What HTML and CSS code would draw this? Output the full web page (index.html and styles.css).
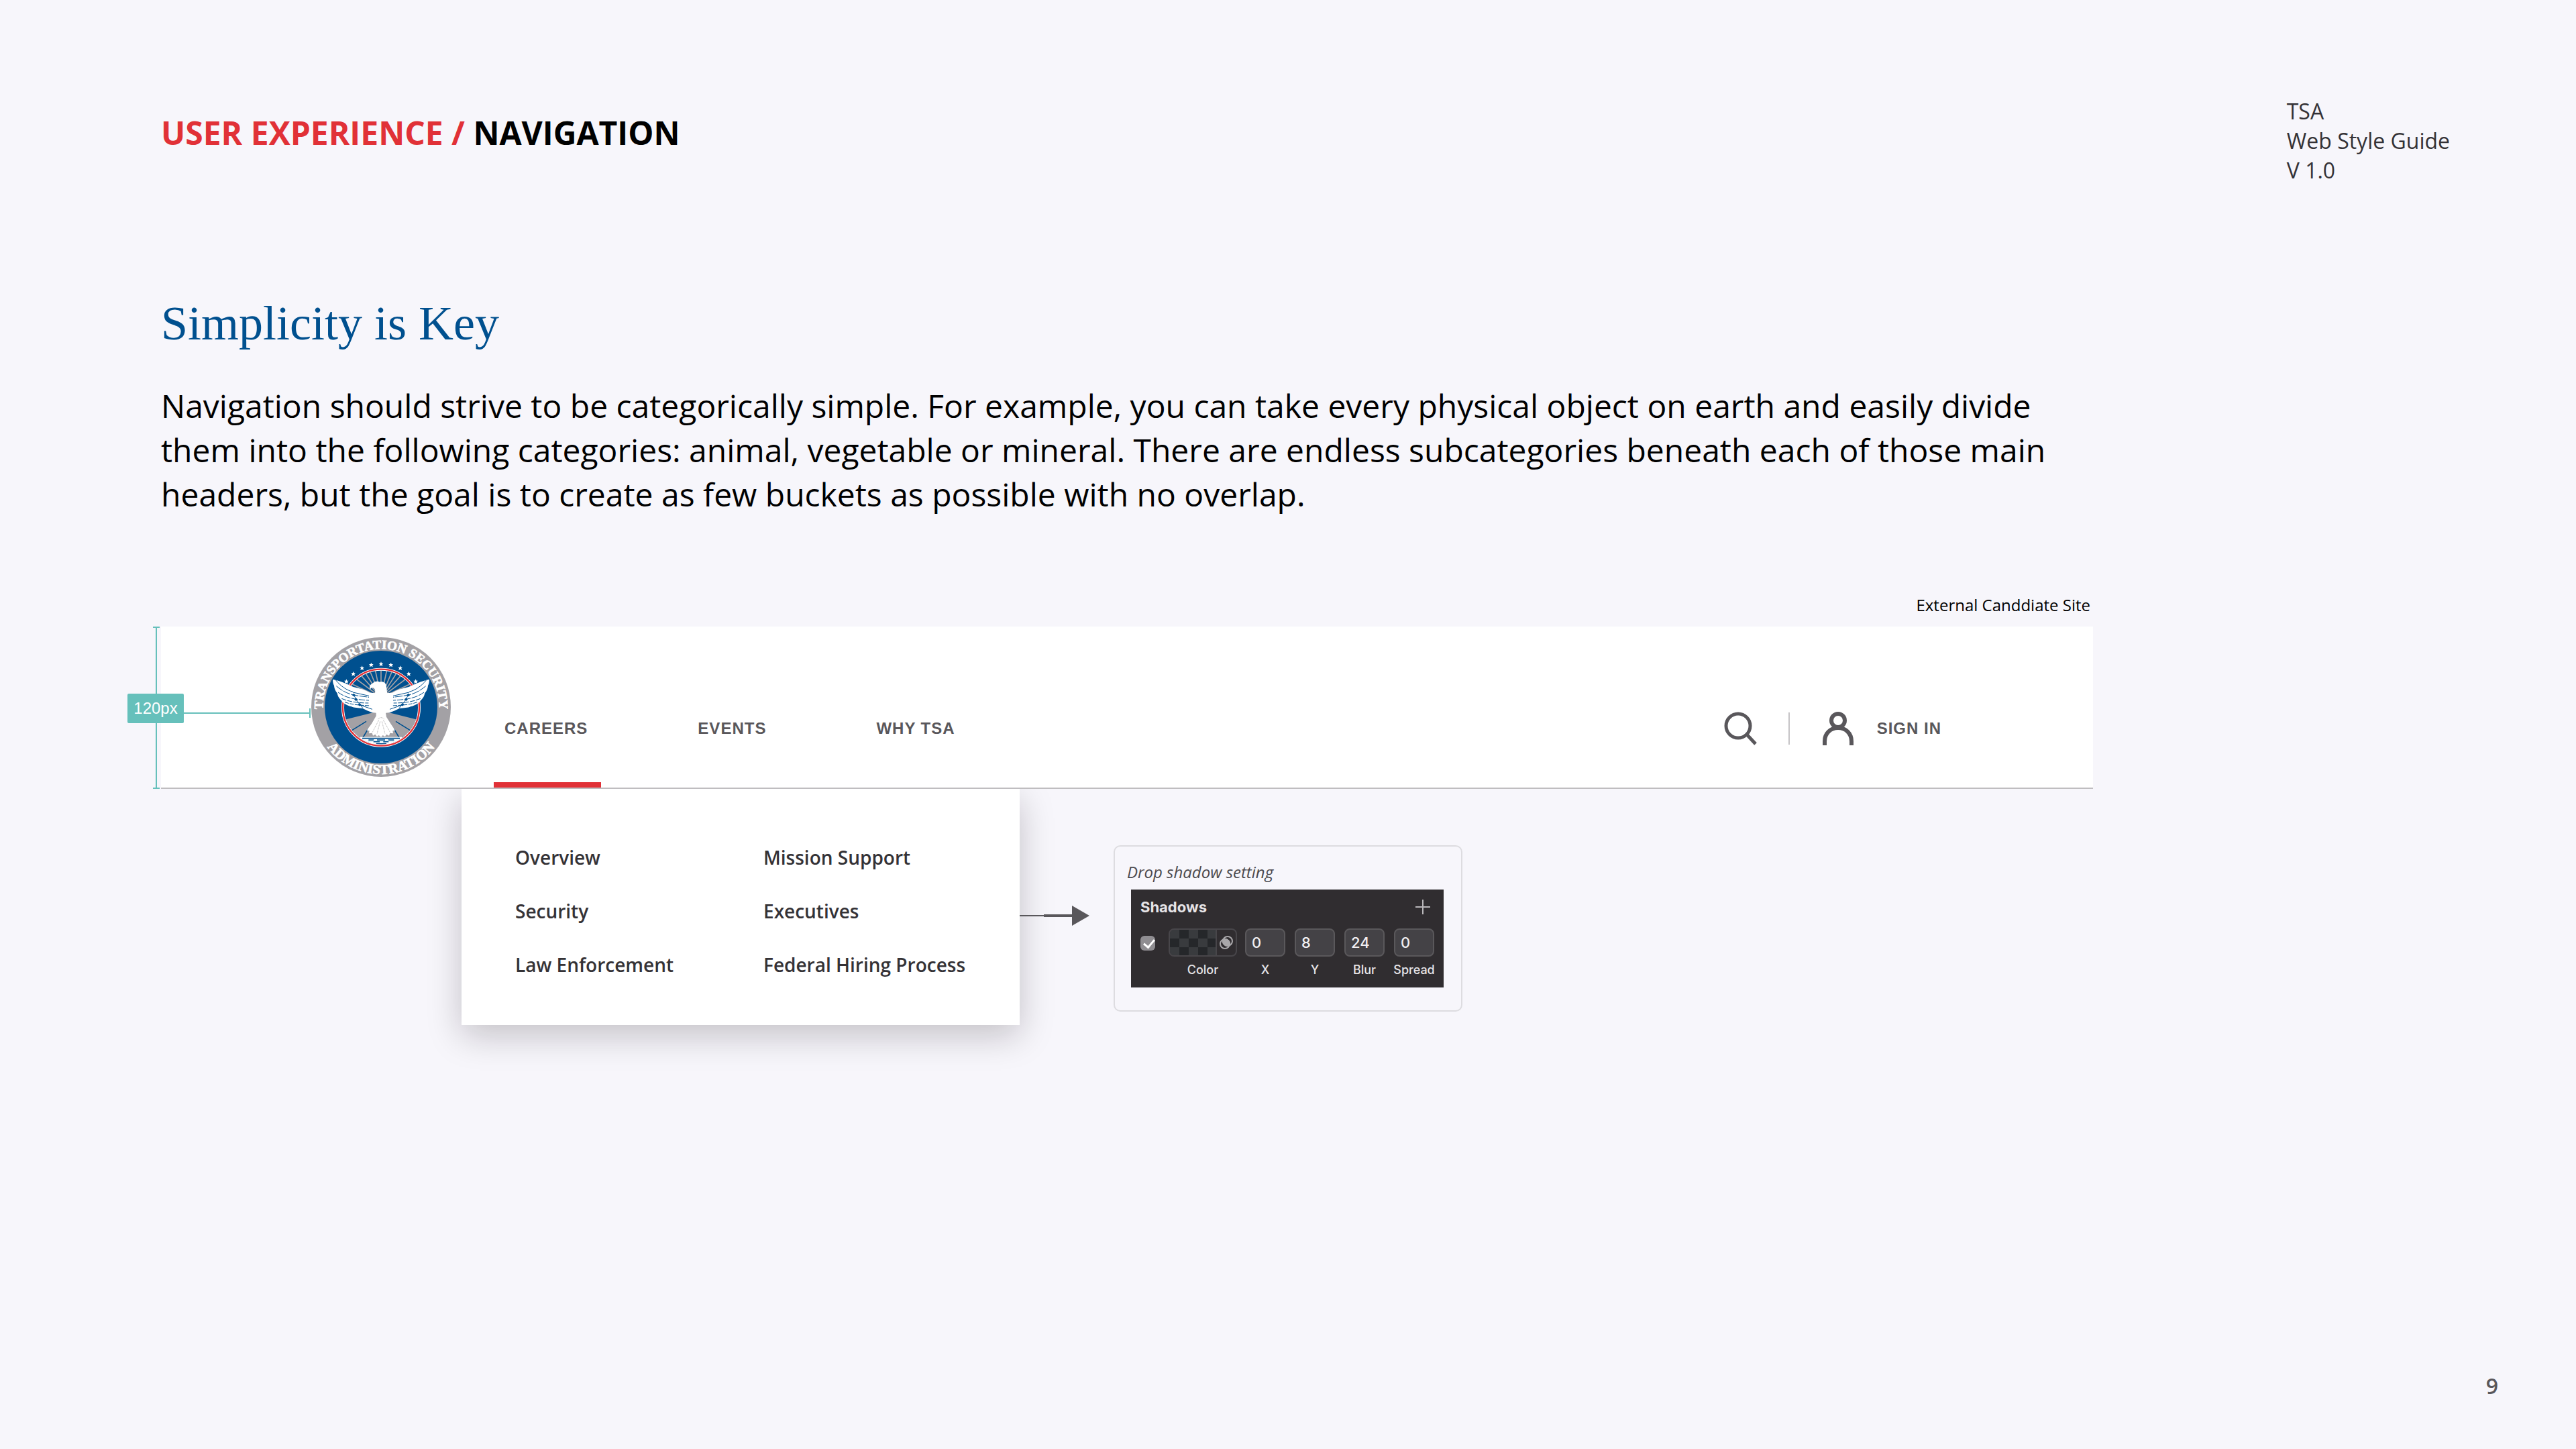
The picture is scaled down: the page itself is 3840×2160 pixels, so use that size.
FILE: index.html
```html
<!DOCTYPE html>
<html lang="en">
<head>
    <meta charset="UTF-8">
    <title>TSA Web Style Guide - Navigation</title>
    <link rel="stylesheet" href="styles.css">
</head>
<body>
    <header class="page-header">
        <h1><span class="section">USER EXPERIENCE /</span> NAVIGATION</h1>
        <p class="doc-info">TSA<br>Web Style Guide<br>V 1.0</p>
    </header>

    <main class="content">
        <h2>Simplicity is Key</h2>
        <p class="intro">Navigation should strive to be categorically simple. For example, you can take every physical object on earth and easily divide them into the following categories: animal, vegetable or mineral. There are endless subcategories beneath each of those main headers, but the goal is to create as few buckets as possible with no overlap.</p>

        <p class="caption">External Canddiate Site</p>

        <div class="navbar">
            <!-- Height annotation -->
            <div class="measure">
                <span class="measure-label">120px</span>
                <span class="measure-pointer"></span>
            </div>

            <svg class="logo" viewBox="72 60 624 624" role="img" aria-label="Transportation Security Administration">
                <defs>
                    <path id="arc-top" d="M384 632 A260 260 0 1 1 385 632"/>
                    <path id="arc-bottom" d="M84 372 A300 300 0 0 0 684 372"/>
                    <clipPath id="inner"><circle cx="384" cy="374" r="166"/></clipPath>
                    <path id="star" d="M0 -11 L3 -4 L10 -4 L5 1 L7 9 L0 5 L-7 9 L-5 1 L-10 -4 L-3 -4 Z"/>
                    <g id="wing">
                        <path fill="#fff" d="M168 248 C205 256 235 270 260 282 C290 288 315 296 335 308 L365 310 L384 400 L345 397 L322 388 L302 378 C280 376 265 376 252 370 C230 364 216 356 208 344 C194 332 190 320 188 310 C178 298 174 284 174 276 C169 266 168 258 168 248 Z"/>
                        <g fill="none" stroke="#00508f" stroke-width="3">
                            <path d="M182 252 C205 280 230 296 258 304"/>
                            <path d="M184 278 C215 304 245 318 285 322 L330 328" stroke-dasharray="34 4"/>
                            <path d="M192 306 C225 330 260 338 330 342" stroke-dasharray="28 5"/>
                            <path d="M208 334 C240 348 280 354 328 354" stroke-dasharray="22 5"/>
                            <path d="M222 350 C255 362 290 364 336 366" stroke-dasharray="18 5"/>
                            <path d="M258 306 L330 322 M262 318 L278 346 L302 376 M288 362 L345 382"/>
                        </g>
                        <path fill="#00508f" d="M254 318 l8 -7 l8 7 l-8 7z M264 338 l8 -7 l8 7 l-8 7z M280 361 l8 -7 l8 7 l-8 7z"/>
                    </g>
                </defs>
                <circle cx="384" cy="372" r="312" fill="#a3a1a5"/>
                <circle cx="384" cy="372" r="252" fill="#00508f"/>
                <text class="logo-text"><textPath href="#arc-top" startOffset="50%">TRANSPORTATION SECURITY</textPath></text>
                <text class="logo-text logo-text-bottom"><textPath href="#arc-bottom" startOffset="50%">ADMINISTRATION</textPath></text>

                <g fill="#fff">
                    <use href="#star" x="229" y="258"/>
                    <use href="#star" x="260" y="224"/>
                    <use href="#star" x="299" y="198"/>
                    <use href="#star" x="340" y="184"/>
                    <use href="#star" x="384" y="180"/>
                    <use href="#star" x="428" y="184"/>
                    <use href="#star" x="470" y="198"/>
                    <use href="#star" x="508" y="224"/>
                    <use href="#star" x="539" y="258"/>
                </g>

                <g clip-path="url(#inner)">
                    <!-- sun rays -->
                    <path fill="none" stroke="#a3a1a5" stroke-width="5" d="M384 330 L230 258 M384 330 L254 232 M384 330 L278 212 M384 330 L302 200 M384 330 L328 196 M384 330 L356 196 M384 330 V196 M384 330 L412 196 M384 330 L440 196 M384 330 L466 200 M384 330 L490 212 M384 330 L514 232 M384 330 L538 258"/>
                    <!-- ground -->
                    <path fill="#a3a1a5" d="M384 388 L222 428 L250 490 L302 512 H466 L518 490 L546 428 Z"/>
                    <path fill="none" stroke="#00508f" stroke-width="5" d="M318 436 L254 476 M450 436 L514 476 M326 470 L302 510 M442 470 L466 510"/>
                    <rect x="290" y="506" width="188" height="40" fill="#fff"/>
                    <path fill="none" stroke="#00508f" stroke-width="5" d="M300 512 H468 M328 519 h24 m14 0 h36 m14 0 h26 M350 527 h28 m16 0 h24 M362 536 h46"/>
                    <path fill="none" stroke="#4aa8c0" stroke-width="2" d="M324 524 h24 m20 0 h32 m20 0 h24"/>
                </g>
                <circle cx="384" cy="374" r="171" fill="none" stroke="#fff" stroke-width="12"/>
                <circle cx="384" cy="374" r="171" fill="none" stroke="#e13137" stroke-width="7"/>

                <!-- eagle -->
                <use href="#wing"/>
                <use href="#wing" transform="matrix(-1 0 0 1 768 0)"/>
                <path fill="#fff" d="M336 294 C330 282 334 270 346 266 C354 256 372 256 378 260 C392 256 404 262 407 274 L412 312 L424 380 L405 398 L408 416 L428 448 L447 476 L436 478 L438 490 L424 488 L420 500 L408 494 L402 504 L392 498 L384 506 L374 498 L366 504 L358 494 L348 500 L344 488 L330 490 L332 478 L320 476 L342 446 L362 412 L362 398 L344 380 L356 312 C362 296 352 284 344 286 C338 286 338 290 336 294 Z"/>
                <path fill="none" stroke="#a3a1a5" stroke-width="2" stroke-dasharray="10 4" d="M374 430 L346 484 M380 436 L366 492 M388 436 L402 492 M394 430 L424 484 M370 426 Q384 412 398 426"/>
            </svg>

            <nav class="links">
                <a class="active" href="#">CAREERS</a>
                <a href="#">EVENTS</a>
                <a href="#">WHY TSA</a>
            </nav>

            <div class="actions">
                <button type="button" class="search" aria-label="Search">
                    <svg viewBox="0 0 48 48" fill="none" stroke="#59575b" stroke-width="5">
                        <circle cx="21" cy="20" r="18"/>
                        <path d="M34 33 L47 47"/>
                    </svg>
                </button>
                <span class="divider"></span>
                <a class="sign-in" href="#">
                    <svg viewBox="0 0 48 48" fill="none" stroke="#59575b" stroke-width="6">
                        <circle cx="24" cy="12" r="10"/>
                        <path d="M4 49 V43 C4 31 13 23 24 23 C35 23 44 31 44 43 V49"/>
                    </svg>
                    SIGN IN
                </a>
            </div>
        </div>

        <div class="example">
            <ul class="dropdown">
                <li><a href="#">Overview</a></li>
                <li><a href="#">Mission Support</a></li>
                <li><a href="#">Security</a></li>
                <li><a href="#">Executives</a></li>
                <li><a href="#">Law Enforcement</a></li>
                <li><a href="#">Federal Hiring Process</a></li>
            </ul>

            <svg class="arrow" viewBox="0 0 104 30" fill="#59575b">
                <path d="M0 14 H36 V13 H78 V0 L104 15 L78 30 V17 H36 V16 H0 Z"/>
            </svg>

            <section class="card">
                <h3>Drop shadow setting</h3>
                <form class="panel">
                    <div class="panel-header">
                        <h4>Shadows</h4>
                        <button type="button" class="add" aria-label="Add shadow">
                            <svg viewBox="0 0 22 22" stroke="#b9b7ba" stroke-width="2"><path d="M11 0 V22 M0 11 H22"/></svg>
                        </button>
                    </div>
                    <div class="fields">
                        <input type="checkbox" class="enabled" aria-label="Enable shadow" checked>
                        <div class="field field-color">
                            <button type="button" class="swatch" id="color">
                                <span class="checker"></span>
                                <svg viewBox="0 0 20 24" fill="none" stroke="#a9a7aa" stroke-width="2">
                                    <circle cx="12" cy="10" r="7"/>
                                    <circle cx="8" cy="14" r="7"/>
                                    <path fill="#a9a7aa" d="M5 8 A7 7 0 0 1 15 16 A7 7 0 0 1 5 8 Z"/>
                                </svg>
                            </button>
                            <label for="color">Color</label>
                        </div>
                        <div class="field">
                            <input type="text" id="x" value="0">
                            <label for="x">X</label>
                        </div>
                        <div class="field">
                            <input type="text" id="y" value="8">
                            <label for="y">Y</label>
                        </div>
                        <div class="field">
                            <input type="text" id="blur" value="24">
                            <label for="blur">Blur</label>
                        </div>
                        <div class="field">
                            <input type="text" id="spread" value="0">
                            <label for="spread">Spread</label>
                        </div>
                    </div>
                </form>
            </section>
        </div>
    </main>

    <footer class="page-footer">9</footer>
</body>
</html>
```

FILE: styles.css
```css
* {
    box-sizing: border-box;
}

body {
    margin: 0;
    min-height: 100vh;
    display: flex;
    flex-direction: column;
    background-color: #f7f6fb;
    color: #000;
    font-family: "Open Sans", sans-serif;
}

h1, h2, h3, h4, p, ul {
    margin: 0;
    padding: 0;
}

a {
    color: inherit;
    text-decoration: none;
}

button {
    padding: 0;
    border: none;
    background: none;
    cursor: pointer;
}

svg {
    display: block;
    overflow: visible;
}

/* Page header */
.page-header {
    display: flex;
    justify-content: space-between;
    align-items: flex-start;
    padding: 144px 188px 0 240px;
}

h1 {
    margin-top: 22px;
    font-size: 48px;
    line-height: 64px;
    font-weight: 700;
}

.section {
    color: #e13137;
}

.doc-info {
    color: #343236;
    font-size: 32px;
    line-height: 44px;
    font-weight: 400;
}

/* Content */
.content {
    flex: 1;
    margin: 162px 720px 0 240px;
}

h2 {
    color: #00508f;
    font-family: "Liberation Serif", serif;
    font-size: 72px;
    line-height: 88px;
    font-weight: 400;
}

.intro {
    margin-top: 46px;
    font-size: 48px;
    line-height: 66px;
}

.caption {
    margin: 116px 4px 16px 0;
    font-size: 24px;
    line-height: 32px;
    text-align: right;
}

/* Navigation bar */
.navbar {
    position: relative;
    display: flex;
    align-items: flex-start;
    height: 242px;
    padding: 0 226px 0 224px;
    border-bottom: 2px solid #bfbdc0;
    background-color: #fff;
}

.logo {
    width: 208px;
    height: 208px;
    margin-top: 16px;
}

.logo-text {
    fill: #fff;
    stroke: #fff;
    stroke-width: 2px;
    font-family: "Liberation Serif", serif;
    font-size: 57px;
    font-weight: 700;
    text-anchor: middle;
}

.logo-text-bottom {
    font-size: 62px;
}

.links {
    display: flex;
    align-self: flex-end;
    gap: 128px;
    margin-left: 64px;
}

.links a,
.sign-in {
    color: #59575b;
    font-family: "Liberation Sans", sans-serif;
    font-size: 24px;
    line-height: 32px;
    font-weight: 700;
    letter-spacing: 1px;
}

.links a {
    padding: 0 20px 64px 16px;
    border-bottom: 8px solid transparent;
}

.links .active {
    border-color: #e13137;
}

.actions {
    display: flex;
    align-items: center;
    gap: 48px;
    margin: 128px 0 0 auto;
}

.actions svg {
    width: 48px;
    height: 48px;
}

.divider {
    width: 2px;
    height: 48px;
    background-color: #c5c3c6;
}

.sign-in {
    display: flex;
    align-items: center;
    gap: 34px;
}

/* Height annotation, drawn over the left edge of the bar */
.measure {
    position: absolute;
    top: 0;
    bottom: -2px;
    left: -12px;
    width: 10px;
    border: solid #66c0bb;
    border-width: 2px 0;
    background: linear-gradient(#66c0bb, #66c0bb) center / 2px 100% no-repeat;
}

.measure-label {
    position: absolute;
    top: 98px;
    left: -38px;
    width: 84px;
    border-radius: 2px;
    background-color: #66c0bb;
    color: #fff;
    font-family: "Liberation Sans", sans-serif;
    font-size: 24px;
    line-height: 44px;
    text-align: center;
}

.measure-pointer {
    position: absolute;
    top: 120px;
    left: 46px;
    width: 189px;
    height: 14px;
    border-right: 2px solid #66c0bb;
    background: linear-gradient(#66c0bb, #66c0bb) center / 100% 2px no-repeat;
}

/* Dropdown example */
.example {
    display: flex;
    align-items: flex-start;
    padding-left: 448px;
}

.dropdown {
    display: grid;
    grid-template-columns: 370px 1fr;
    width: 832px;
    padding: 62px 0 50px 80px;
    background-color: #fff;
    box-shadow: 0 16px 48px rgba(20, 10, 20, 0.22);
    color: #343236;
    font-size: 28px;
    line-height: 80px;
    font-weight: 600;
    list-style: none;
}

.arrow {
    width: 104px;
    height: 30px;
    margin-top: 174px;
}

/* Shadow settings */
.card {
    width: 520px;
    margin: 84px 0 0 36px;
    padding: 22px 26px 34px 18px;
    border: 2px solid #dddce0;
    border-radius: 10px;
}

.card h3 {
    color: #4c4a4e;
    font-size: 24px;
    line-height: 32px;
    font-style: italic;
    font-weight: 400;
}

.panel {
    margin: 10px 0 0 6px;
    padding: 12px 14px 14px;
    background-color: #302d30;
    color: #e6e4e7;
    font-family: Inter, sans-serif;
}

.panel-header {
    display: flex;
    justify-content: space-between;
    align-items: center;
    height: 28px;
    margin-bottom: 18px;
    padding-right: 6px;
}

.panel h4 {
    font-size: 22px;
    font-weight: 700;
}

.add svg {
    width: 22px;
    height: 22px;
}

.fields {
    display: flex;
    gap: 14px;
}

.enabled {
    appearance: none;
    width: 22px;
    height: 22px;
    margin: 11px 6px 0 0;
    border-radius: 6px;
    background-color: #8f8d91;
}

.enabled:checked::before {
    content: "";
    display: block;
    width: 7px;
    height: 13px;
    margin: 2px 0 0 8px;
    border: solid #fff;
    border-width: 0 3px 3px 0;
    transform: rotate(40deg);
}

.field {
    display: flex;
    flex-direction: column;
    align-items: center;
    gap: 8px;
    width: 60px;
    font-size: 18px;
    line-height: 24px;
    font-weight: 500;
}

.field-color {
    width: 102px;
    margin-right: -2px;
}

.field input {
    width: 60px;
    height: 42px;
    padding: 0 8px;
    border: 2px solid #5a585b;
    border-radius: 8px;
    background-color: #444246;
    color: #f0eef1;
    font-family: Inter, sans-serif;
    font-size: 22px;
    font-weight: 500;
}

.swatch {
    display: flex;
    align-items: center;
    gap: 4px;
    width: 102px;
    height: 42px;
    border: 2px solid #48464a;
    border-radius: 8px;
    overflow: hidden;
}

.checker {
    width: 70px;
    height: 100%;
    border-right: 2px solid #48464a;
    background: repeating-conic-gradient(#25272a 0 25%, #393b3e 0 50%) 0 0 / 28px 26px;
}

.swatch svg {
    width: 20px;
    height: 24px;
}

/* Page footer */
.page-footer {
    padding: 0 116px 72px 0;
    color: #59575b;
    font-size: 32px;
    line-height: 44px;
    font-weight: 600;
    text-align: right;
}
```
